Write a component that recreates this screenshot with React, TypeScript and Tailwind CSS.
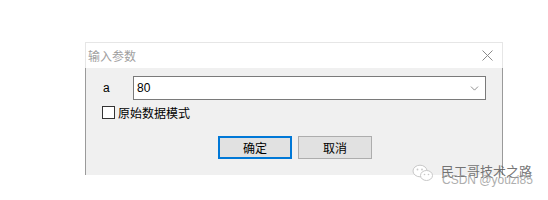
import { ChevronDown } from 'lucide-react';

const cjk = "font-['Microsoft_YaHei','Noto_Sans_CJK_SC',sans-serif]";

export default function App() {
  return (
    <div className="relative h-[200px] w-[548px] overflow-hidden bg-white pl-[85px] pt-[42px]">
      <div className="w-[418px]">
        {/* Title bar */}
        <div className="flex h-[26px] items-center justify-between border-x border-t border-[#e6e6e6] bg-white pl-[2px] pr-[9px]">
          <span className={`${cjk} text-[12px] leading-none text-[#a0a0a0]`}>输入参数</span>
          <svg width="11" height="11" viewBox="0 0 11 11" className="text-[#8a8a8a]">
            <path d="M0.5 0.5 L10.5 10.5 M10.5 0.5 L0.5 10.5" stroke="currentColor" strokeWidth="1" fill="none" />
          </svg>
        </div>

        {/* Body */}
        <div className="h-[107px] border-x border-[#9a9a9a] bg-[#f0f0f0] pt-[8px]">
          <div className="flex h-[24px] items-center">
            <span className="ml-[17px] w-[30px] font-['Liberation_Sans',sans-serif] text-[12px] text-black">a</span>
            <div className="flex h-[24px] w-[353px] items-center justify-between border border-[#7a7a7a] bg-white pl-[3px] pr-[4px]">
              <span className="font-['Liberation_Sans',sans-serif] text-[12px] text-black">80</span>
              <ChevronDown size={13} strokeWidth={1.2} className="text-[#555]" />
            </div>
          </div>

          <div className="mt-[6px] flex h-[13px] items-center">
            <div className="ml-[16px] h-[13px] w-[13px] border border-[#333] bg-white" />
            <span className={`${cjk} ml-[3px] text-[12px] leading-none text-black`}>原始数据模式</span>
          </div>

          <div className="mt-[17px] flex h-[23px] items-stretch">
            <button className={`${cjk} ml-[132px] w-[74px] border-2 border-[#0078d7] bg-[#e1e1e1] text-[12px] leading-none text-black`}>
              确定
            </button>
            <button className={`${cjk} ml-[6px] w-[74px] border border-[#adadad] bg-[#e1e1e1] text-[12px] leading-none text-black`}>
              取消
            </button>
          </div>
        </div>
      </div>

      {/* Watermark */}
      <div className="absolute left-[412px] top-[164px] flex items-center">
        <svg width="22" height="18" viewBox="0 0 22 18" className="text-[#c8c8c8]">
          <ellipse cx="8" cy="7" rx="7" ry="5.8" fill="white" stroke="currentColor" strokeWidth="1" />
          <ellipse cx="14.5" cy="11.5" rx="6" ry="5" fill="white" stroke="currentColor" strokeWidth="1" />
          <circle cx="5.5" cy="5.5" r="0.9" fill="currentColor" />
          <circle cx="10" cy="5.5" r="0.9" fill="currentColor" />
          <circle cx="12.5" cy="10.5" r="0.8" fill="currentColor" />
          <circle cx="16.5" cy="10.5" r="0.8" fill="currentColor" />
        </svg>
      </div>
      <span className={`${cjk} absolute left-[441px] top-[164px] text-[13px] leading-none text-[#555] opacity-80`}>
        民工哥技术之路
      </span>
      <span className="absolute left-[442px] top-[174px] font-['Liberation_Sans',sans-serif] text-[12px] leading-none text-[#9a9a9a] opacity-80">
        CSDN @youzi85
      </span>
    </div>
  );
}
